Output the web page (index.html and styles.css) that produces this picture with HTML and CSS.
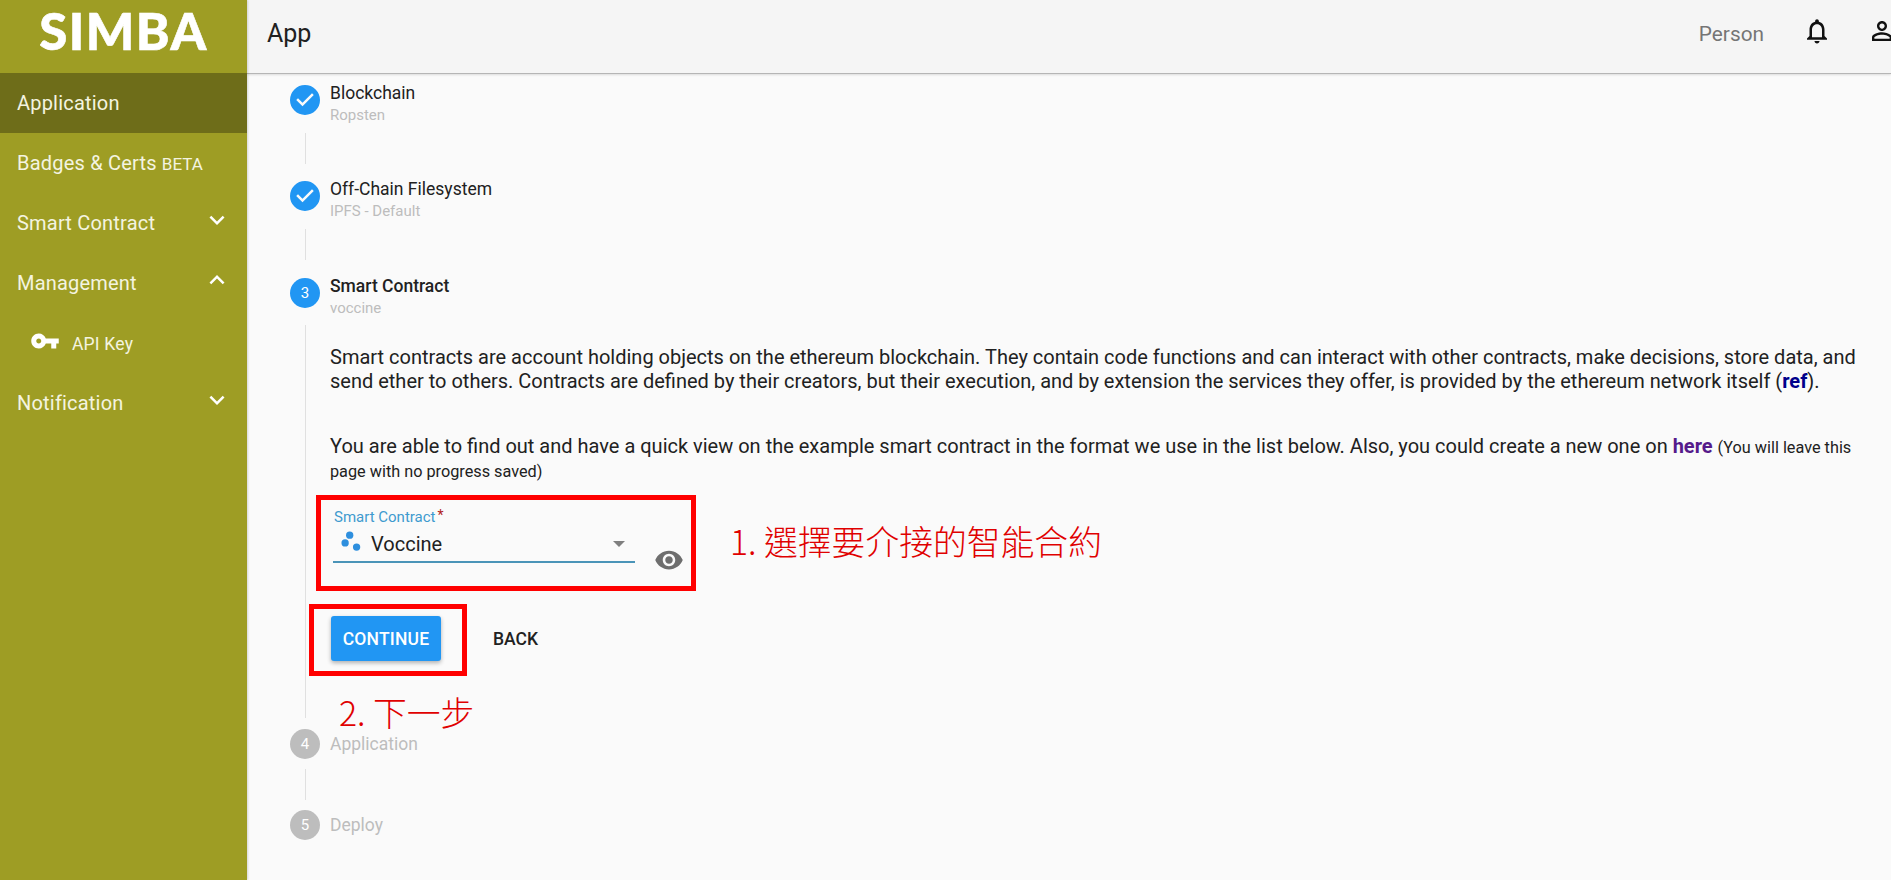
FILE: index.html
```html
<!DOCTYPE html>
<html lang="en">
<head>
<meta charset="utf-8">
<title>SIMBA App</title>
<link rel="stylesheet" href="styles.css">
</head>
<body>
<div class="app">
  <aside class="sidebar">
    <div class="logo">SIMBA</div>
    <nav class="nav">
      <div class="nav-item active"><span>Application</span></div>
      <div class="nav-item"><span>Badges &amp; Certs <small>BETA</small></span></div>
      <div class="nav-item"><span>Smart Contract</span><svg class="chev" viewBox="0 0 24 24"><path d="M16.59 8.59L12 13.17 7.41 8.59 6 10l6 6 6-6z"/></svg></div>
      <div class="nav-item"><span>Management</span><svg class="chev" viewBox="0 0 24 24"><path d="M12 8l-6 6 1.41 1.41L12 10.83l4.59 4.58L18 14z"/></svg></div>
      <div class="nav-item sub"><svg class="key" viewBox="0 0 24 24"><path d="M12.65 10C11.83 7.67 9.61 6 7 6c-3.31 0-6 2.69-6 6s2.69 6 6 6c2.61 0 4.83-1.67 5.65-4H17v4h4v-4h2v-4H12.65zM7 14c-1.1 0-2-.9-2-2s.9-2 2-2 2 .9 2 2-.9 2-2 2z"/></svg><span>API Key</span></div>
      <div class="nav-item"><span>Notification</span><svg class="chev" viewBox="0 0 24 24"><path d="M16.59 8.59L12 13.17 7.41 8.59 6 10l6 6 6-6z"/></svg></div>
    </nav>
  </aside>
  <div class="main">
    <header class="topbar">
      <h1 class="title">App</h1>
      <div class="top-right">
        <span class="person">Person</span>
        <svg class="top-icon" viewBox="0 0 24 24"><path d="M12 22c1.1 0 2-.9 2-2h-4c0 1.1.9 2 2 2zm6-6v-5c0-3.07-1.63-5.64-4.5-6.32V4c0-.83-.67-1.5-1.5-1.5s-1.5.67-1.5 1.5v.68C7.64 5.36 6 7.92 6 11v5l-2 2v1h16v-1l-2-2zm-2 1H8v-6c0-2.48 1.51-4.5 4-4.5s4 2.02 4 4.5v6z"/></svg>
        <svg class="top-icon user" viewBox="0 0 24 24"><path d="M12 5.9c1.16 0 2.1.94 2.1 2.1s-.94 2.1-2.1 2.1S9.9 9.16 9.9 8s.94-2.1 2.1-2.1m0 9c2.97 0 6.1 1.46 6.1 2.1v1.1H5.9V17c0-.64 3.13-2.1 6.1-2.1M12 4C9.79 4 8 5.79 8 8s1.79 4 4 4 4-1.79 4-4-1.79-4-4-4zm0 9c-2.67 0-8 1.34-8 4v3h16v-3c0-2.66-5.33-4-8-4z"/></svg>
      </div>
    </header>
    <section class="stepper">
      <div class="step">
        <svg class="step-icon" viewBox="0 0 24 24"><path d="M12 0a12 12 0 1 0 0 24 12 12 0 0 0 0-24zm-2 17l-5-5 1.4-1.4 3.6 3.6 7.6-7.6L19 8l-9 9z"/></svg>
        <div class="labels"><div class="step-title">Blockchain</div><div class="step-sub">Ropsten</div></div>
      </div>
      <div class="connector"></div>
      <div class="step">
        <svg class="step-icon" viewBox="0 0 24 24"><path d="M12 0a12 12 0 1 0 0 24 12 12 0 0 0 0-24zm-2 17l-5-5 1.4-1.4 3.6 3.6 7.6-7.6L19 8l-9 9z"/></svg>
        <div class="labels"><div class="step-title">Off-Chain Filesystem</div><div class="step-sub">IPFS - Default</div></div>
      </div>
      <div class="connector wide"></div>
      <div class="step">
        <span class="step-num">3</span>
        <div class="labels"><div class="step-title current">Smart Contract</div><div class="step-sub">voccine</div></div>
      </div>
      <div class="step-body">
        <p class="para">Smart contracts are account holding objects on the ethereum blockchain. They contain code functions and can interact with other contracts, make decisions, store data, and send ether to others. Contracts are defined by their creators, but their execution, and by extension the services they offer, is provided by the ethereum network itself (<a class="link-ref">ref</a>).</p>
        <p class="para second">You are able to find out and have a quick view on the example smart contract in the format we use in the list below. Also, you could create a new one on <a class="link-here">here</a> <small class="note">(You will leave this page with no progress saved)</small></p>
        <div class="field-row">
          <div class="field">
            <div class="field-label">Smart Contract<sup class="req">*</sup></div>
            <div class="select">
              <svg class="dots" viewBox="0 0 24 24"><circle cx="9.5" cy="4.5" r="4"/><circle cx="4.5" cy="13" r="4"/><circle cx="17" cy="17.5" r="4"/></svg>
              <span class="select-value">Voccine</span>
              <span class="caret"></span>
            </div>
          </div>
          <svg class="eye" viewBox="0 0 24 24"><path d="M12 4.5C7 4.5 2.73 7.61 1 12c1.73 4.39 6 7.5 11 7.5s9.27-3.11 11-7.5c-1.73-4.39-6-7.5-11-7.5zM12 17c-2.76 0-5-2.24-5-5s2.24-5 5-5 5 2.24 5 5-2.24 5-5 5zm0-8c-1.66 0-3 1.34-3 3s1.34 3 3 3 3-1.34 3-3-1.34-3-3-3z"/></svg>
          <div class="red-box box-field"></div>
          <div class="note-red note-one">1. 選擇要介接的智能合約</div>
        </div>
        <div class="actions">
          <button class="btn-primary">CONTINUE</button>
          <button class="btn-text">BACK</button>
          <div class="red-box box-btn"></div>
          <div class="note-red note-two">2. 下一步</div>
        </div>
      </div>
      <div class="step pending">
        <span class="step-num off">4</span>
        <div class="labels"><div class="step-title off">Application</div></div>
      </div>
      <div class="connector short"></div>
      <div class="step pending">
        <span class="step-num off">5</span>
        <div class="labels"><div class="step-title off">Deploy</div></div>
      </div>
    </section>
  </div>
</div>
</body>
</html>
```

FILE: styles.css
```css
* { box-sizing: border-box; }
html, body { margin: 0; padding: 0; height: 100%; overflow: hidden; }
body { font-family: Roboto, "Noto Sans CJK TC", sans-serif; background: #fafafa; color: #212121; }
.app { display: flex; width: 1891px; height: 880px; overflow: hidden; }

.sidebar { flex: 0 0 247px; background: #9e9d24; color: #fff; box-shadow: 1px 0 2px rgba(0,0,0,.15); position: relative; z-index: 2; }
.logo { height: 73px; padding-top: 1px; font-family: Lato, sans-serif; font-weight: 900; font-size: 51px; line-height: 60px; letter-spacing: 1.5px; text-align: center; -webkit-text-stroke: .6px #fff; }
.nav-item { height: 60px; display: flex; align-items: center; justify-content: space-between; padding: 0 15px 0 17px; font-size: 20px; letter-spacing: .2px; color: #f4f4e0; }
.nav-item small { font-size: 17px; letter-spacing: 0; }
.nav-item.active { background: #6e6d19; }
.nav-item.sub { justify-content: flex-start; padding-left: 30px; font-size: 17.5px; gap: 12px; }
.sub span { margin-top: 2px; }
.chev { width: 30px; height: 30px; fill: #fff; margin-top: -6px; }
.key { width: 30px; height: 30px; fill: #fff; margin-top: -5px; }

.main { flex: 1; min-width: 0; display: flex; flex-direction: column; }
.topbar { flex: 0 0 74px; background: #f5f5f5; border-bottom: 1px solid #b5b5b5; box-shadow: 0 1px 2px rgba(0,0,0,.12); display: flex; align-items: center; justify-content: space-between; padding: 0 0 6px 20px; }
.title { margin: 0; font-size: 25px; font-weight: 400; color: #212121; }
.top-right { display: flex; align-items: center; margin-right: -6px; }
.person { font-size: 20.8px; color: #757575; margin-right: 38px; }
.top-icon { width: 30px; height: 30px; fill: #111; margin-top: -6px; }
.user { margin-left: 35px; }

.stepper { padding: 11px 0 0 43px; }
.step { display: flex; align-items: flex-start; gap: 10px; }
.step-icon { flex: none; width: 30px; height: 30px; fill: #2196f3; }
.step-num { flex: none; width: 30px; height: 30px; border-radius: 50%; background: #2196f3; color: #fff; font-size: 15px; line-height: 30px; text-align: center; }
.step-num.off { background: #bdbdbd; }
.labels { margin-top: -2px; }
.step-title { font-size: 17.5px; line-height: 20px; }
.step-title.current { font-weight: 500; }
.step-title.off { color: #bdbdbd; margin-top: 7px; }
.step-sub { font-size: 15px; line-height: 20px; margin-top: 2px; color: #bdbdbd; }
.connector { width: 1px; height: 31px; margin: 8px 0 17px 15px; background: #e0e0e0; }
.connector.wide { margin-bottom: 18px; }
.connector.short { margin: 10px 0 10px 15px; }
.pending { height: 30px; }

.step-body { height: 393px; margin: 7px 0 11px 15px; border-left: 1px solid #e0e0e0; padding: 20px 24px 0 24px; }
.para { margin: 0; font-size: 20px; line-height: 24px; color: #212121; }
.para.second { margin-top: 41px; }
.note { font-size: 16.25px; line-height: 1; }
.link-ref { color: #00008b; font-weight: 700; }
.link-here { color: #551a8b; font-weight: 700; }

.field-row { position: relative; display: flex; align-items: flex-end; margin: 23px 0 0 3px; height: 58px; }
.field { width: 302px; height: 58px; }
.field-label { padding-left: 1px; font-size: 15px; line-height: 24px; color: #3f9bcf; }
.req { color: #b02020; font-size: 14px; line-height: 0; margin-left: 2px; vertical-align: 2px; }
.select { display: flex; align-items: center; height: 34px; border-bottom: 2px solid #4a94b8; padding: 0 2px 3px 8px; }
.dots { width: 22px; height: 22px; fill: #2e8fde; margin-top: -4px; }
.select-value { flex: 1; margin-left: 8px; font-size: 20px; }
.caret { width: 0; height: 0; border: 6px solid transparent; border-top-color: #7f7f7f; border-bottom: 0; margin-right: 8px; }
.eye { width: 30px; height: 30px; fill: #6e6e6e; margin: 0 0 -12px 19px; }
.red-box { position: absolute; border: 5px solid #f00; }
.box-field { left: -17px; top: -10px; width: 380px; height: 96px; }
.note-red { position: absolute; color: #e00000; font-family: "Noto Sans CJK TC", sans-serif; font-weight: 300; font-size: 33.8px; line-height: 40px; white-space: nowrap; }
.note-one { left: 397px; top: 16px; }

.actions { position: relative; display: flex; align-items: center; margin: 53px 0 0 1px; gap: 44px; }
.btn-primary { width: 110px; height: 45px; border: 0; border-radius: 3px; background: #2196f3; color: #fff; font: 500 17.5px Roboto, sans-serif; letter-spacing: .2px; box-shadow: 0 2px 4px rgba(0,0,0,.3); }
.btn-text { border: 0; background: none; padding: 8px; color: #212121; font: 500 17.5px Roboto, sans-serif; }
.box-btn { left: -22px; top: -12px; width: 158px; height: 72px; }
.note-two { left: 8px; top: 76px; }
```
